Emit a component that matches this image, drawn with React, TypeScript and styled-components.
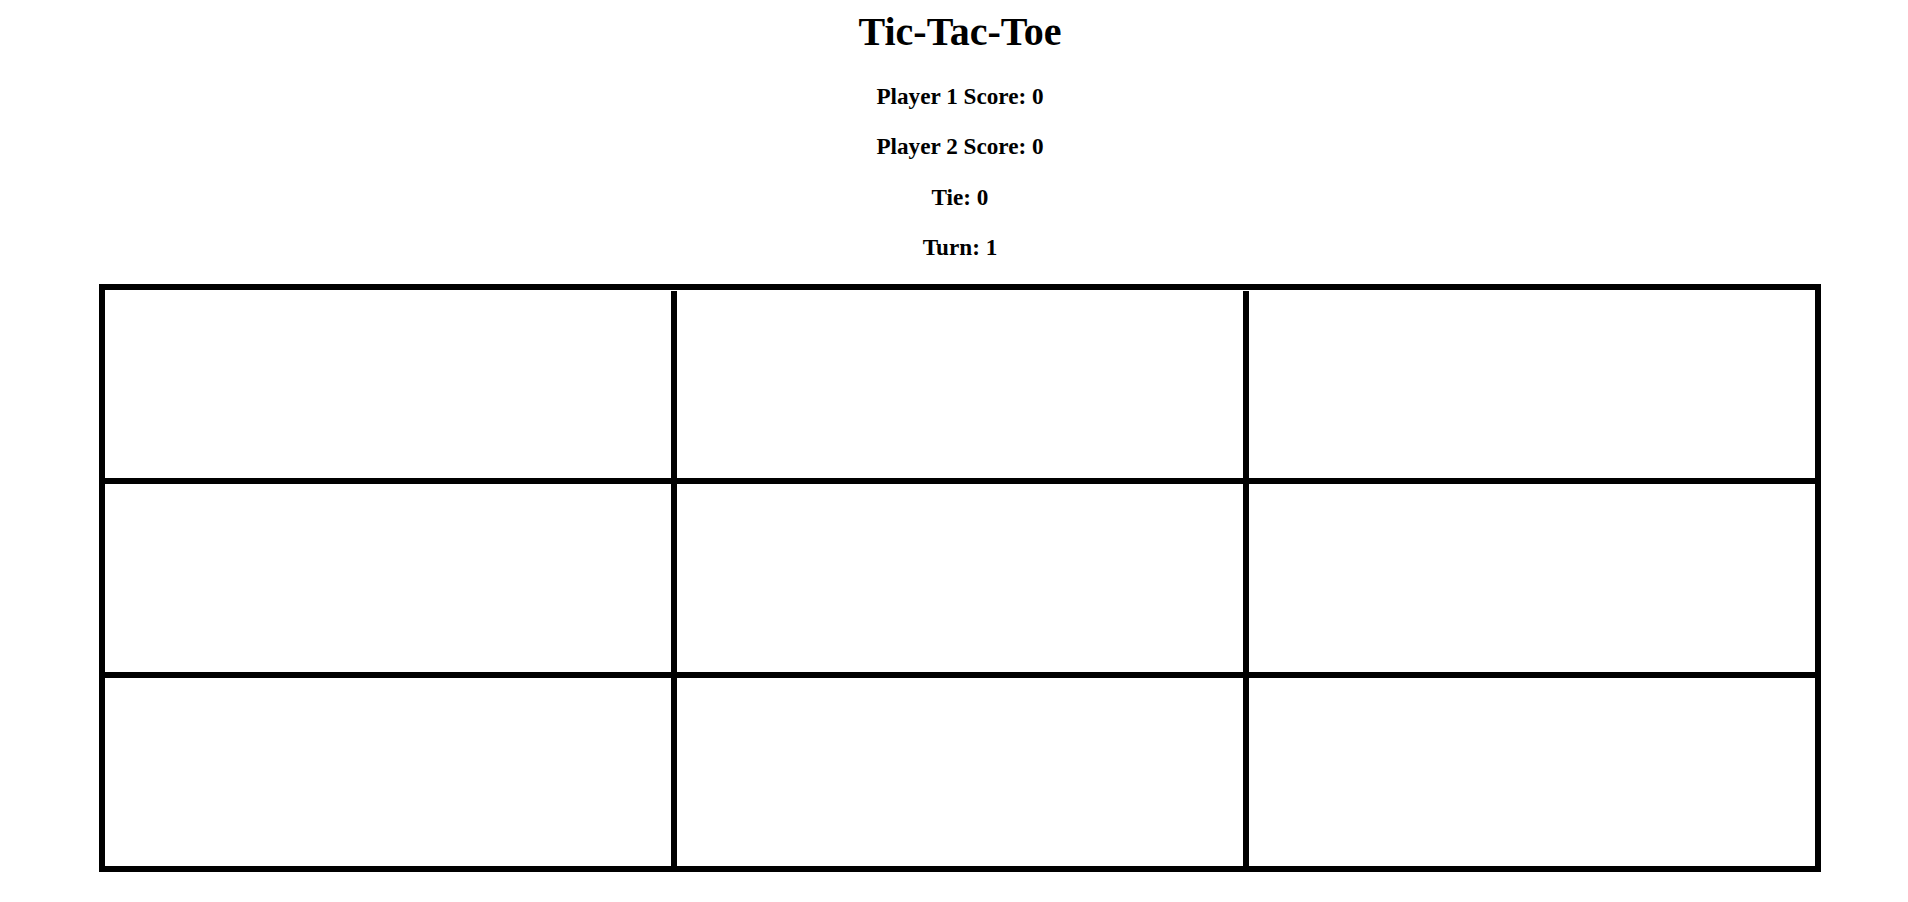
import React from "react";
import styled, { createGlobalStyle } from "styled-components";

const GlobalStyle = createGlobalStyle`
  html, body {
    margin: 0;
    padding: 0;
    background: #ffffff;
  }
  body {
    font-family: "Liberation Serif", "Times New Roman", serif;
    color: #000000;
  }
`;

const Page = styled.main`
  display: flex;
  flex-direction: column;
  align-items: stretch;
  width: 1722px;
  padding: 7px 0 0 99px;
`;

const Title = styled.h1`
  margin: 0;
  text-align: center;
  font-size: 40px;
  line-height: 50px;
  font-weight: 700;
`;

const Stats = styled.section`
  display: flex;
  flex-direction: column;
  margin-top: 14px;
`;

const Stat = styled.h3`
  margin: 0;
  text-align: center;
  font-size: 23.2px;
  line-height: 50.3px;
  font-weight: 700;
`;

const Board = styled.div`
  margin-top: 12px;
  border: 6px solid #000000;
  display: flex;
  flex-direction: column;
  background: #ffffff;
`;

const Row = styled.div<{ $first?: boolean }>`
  display: flex;
  height: ${(p) => (p.$first ? "187px" : "188px")};
  padding-top: ${(p) => (p.$first ? "1px" : "0")};
  border-top: ${(p) => (p.$first ? "none" : "6px solid #000000")};
`;

const Cell = styled.button<{ $divider?: boolean }>`
  appearance: none;
  box-sizing: content-box;
  flex: 1 1 0;
  min-width: 0;
  margin: 0;
  padding: 0;
  background: #ffffff;
  border: none;
  border-left: ${(p) => (p.$divider ? "6px solid #000000" : "none")};
  font-family: inherit;
  cursor: pointer;
`;

export default function App() {
  const rows = [0, 1, 2];
  const cols = [0, 1, 2];
  return (
    <>
      <GlobalStyle />
      <Page>
        <Title>Tic-Tac-Toe</Title>
        <Stats>
          <Stat>Player 1 Score: 0</Stat>
          <Stat>Player 2 Score: 0</Stat>
          <Stat>Tie: 0</Stat>
          <Stat>Turn: 1</Stat>
        </Stats>
        <Board>
          {rows.map((r) => (
            <Row key={r} $first={r === 0}>
              {cols.map((c) => (
                <Cell key={c} $divider={c > 0} aria-label={`cell ${r * 3 + c + 1}`} />
              ))}
            </Row>
          ))}
        </Board>
      </Page>
    </>
  );
}
